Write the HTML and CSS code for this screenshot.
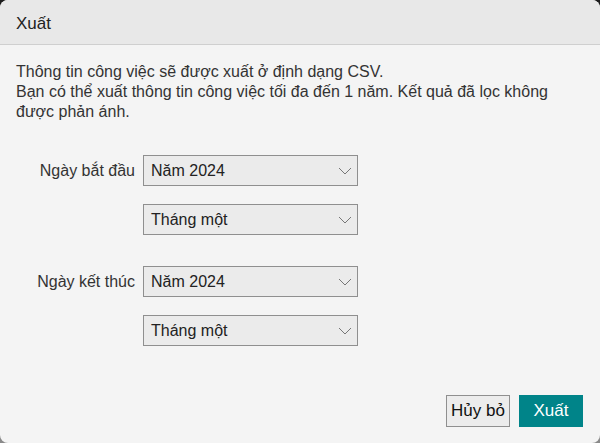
FILE: index.html
```html
<!DOCTYPE html>
<html lang="vi">
<head>
<meta charset="utf-8">
<link rel="stylesheet" href="styles.css">
</head>
<body>
<div class="dialog">
  <div class="header">Xuất</div>
  <div class="content">
    <p class="desc">Thông tin công việc sẽ được xuất ở định dạng CSV.<br>Bạn có thể xuất thông tin công việc tối đa đến 1 năm. Kết quả đã lọc không được phản ánh.</p>
    <div class="group">
      <div class="row">
        <span class="label">Ngày bắt đầu</span>
        <div class="select"><span>Năm 2024</span><svg class="chev" width="14" height="8" viewBox="0 0 14 8"><path d="M1 1 L7 7 L13 1" fill="none" stroke="#777" stroke-width="1"/></svg></div>
      </div>
      <div class="row">
        <span class="label"></span>
        <div class="select"><span>Tháng một</span><svg class="chev" width="14" height="8" viewBox="0 0 14 8"><path d="M1 1 L7 7 L13 1" fill="none" stroke="#777" stroke-width="1"/></svg></div>
      </div>
    </div>
    <div class="group">
      <div class="row">
        <span class="label">Ngày kết thúc</span>
        <div class="select"><span>Năm 2024</span><svg class="chev" width="14" height="8" viewBox="0 0 14 8"><path d="M1 1 L7 7 L13 1" fill="none" stroke="#777" stroke-width="1"/></svg></div>
      </div>
      <div class="row">
        <span class="label"></span>
        <div class="select"><span>Tháng một</span><svg class="chev" width="14" height="8" viewBox="0 0 14 8"><path d="M1 1 L7 7 L13 1" fill="none" stroke="#777" stroke-width="1"/></svg></div>
      </div>
    </div>
  </div>
  <div class="footer">
    <button class="btn cancel">Hủy bỏ</button>
    <button class="btn primary">Xuất</button>
  </div>
</div>
</body>
</html>
```
FILE: styles.css
```css
html, body {
  margin: 0;
  padding: 0;
  width: 600px;
  height: 443px;
  overflow: hidden;
}
body {
  background: linear-gradient(#1c1c1c, #8a8a8a);
  font-family: "Liberation Sans", Arial, sans-serif;
  color: #333;
}
.dialog {
  width: 600px;
  height: 443px;
  background: #f4f4f4;
  border-radius: 8px;
  overflow: hidden;
  display: flex;
  flex-direction: column;
}
.header {
  height: 45px;
  box-sizing: border-box;
  background: #e8e8e8;
  border-bottom: 1px solid #cfcfcf;
  padding: 14px 16px 0;
  font-size: 17px;
  color: #222;
}
.content {
  flex: 1;
  padding: 17px 16px 0;
}
.desc {
  margin: 0;
  font-size: 16px;
  line-height: 20px;
  color: #333;
}
.group {
  margin-top: 33px;
  display: flex;
  flex-direction: column;
  gap: 18px;
}
.group + .group {
  margin-top: 31px;
}
.row {
  display: flex;
  align-items: center;
  gap: 8px;
}
.label {
  width: 119px;
  text-align: right;
  font-size: 16px;
  color: #333;
}
.select {
  width: 215px;
  height: 31px;
  box-sizing: border-box;
  border: 1px solid #8f8f8f;
  background: #ebebeb;
  display: flex;
  align-items: center;
  justify-content: space-between;
  padding: 0 5px 0 7px;
  font-size: 16px;
  color: #222;
}
.footer {
  display: flex;
  justify-content: flex-end;
  gap: 9px;
  padding: 0 17px 16px;
}
.btn {
  height: 32px;
  font-family: "Liberation Sans", Arial, sans-serif;
  font-size: 17px;
  padding: 0;
  width: 64px;
}
.cancel {
  background: #ececec;
  border: 1px solid #8f8f8f;
  color: #111;
}
.primary {
  background: #008489;
  border: none;
  color: #fff;
}
```
